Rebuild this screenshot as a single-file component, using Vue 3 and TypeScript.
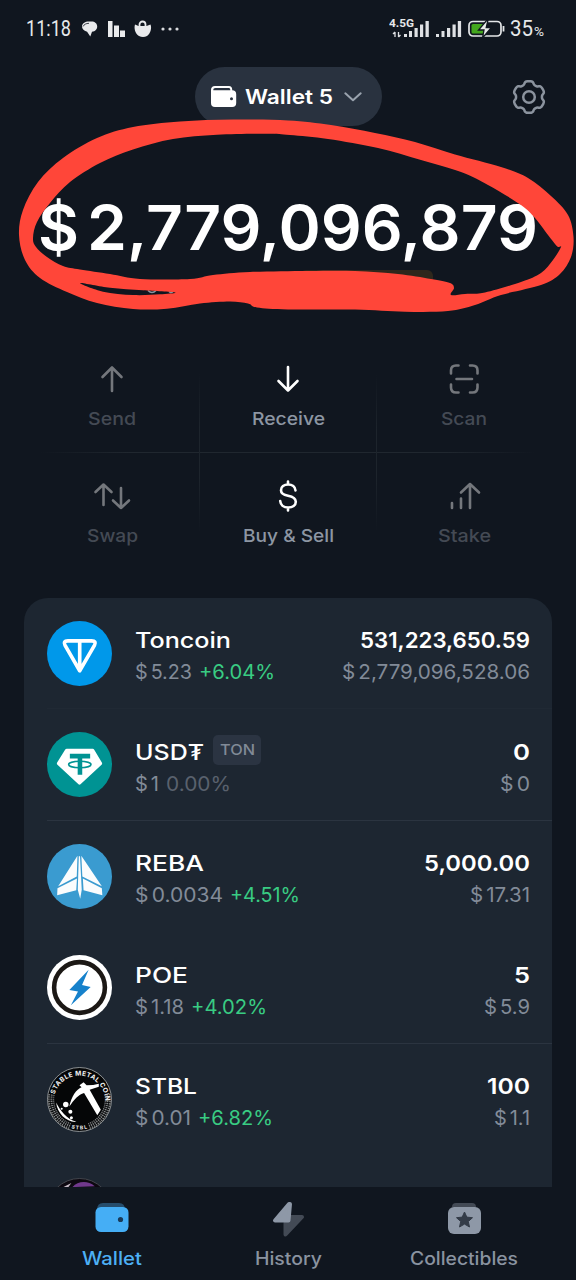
<script setup lang="ts">
type Point = [number, number]

interface Action { id: string; label: string; width: number; muted: boolean }
interface Token {
  id: string
  name: string
  nameW: number
  tag?: string
  price: string
  priceW: number
  change: string
  changeW: number
  flat?: boolean
  amount: string
  amountW: number
  value: string
  valueW: number
}

/* Stretches a line of text horizontally to the given advance width. */
const vFit = {
  mounted(el: HTMLElement, binding: { value: number; arg?: string }) {
    const natural = el.getBoundingClientRect().width
    el.style.width = `${binding.value}px`
    el.style.transform = `scaleX(${binding.value / natural})`
  },
}

const actions: Action[] = [
  { id: 'send', label: 'Send', width: 48, muted: true },
  { id: 'receive', label: 'Receive', width: 73, muted: false },
  { id: 'scan', label: 'Scan', width: 46, muted: true },
  { id: 'swap', label: 'Swap', width: 51, muted: true },
  { id: 'buy', label: 'Buy & Sell', width: 91, muted: false },
  { id: 'stake', label: 'Stake', width: 53, muted: true },
]

const tokens: Token[] = [
  { id: 'ton', name: 'Toncoin', nameW: 96, price: '5.23', priceW: 57, change: '+6.04%', changeW: 76, amount: '531,223,650.59', amountW: 170, value: '2,779,096,528.06', valueW: 188 },
  { id: 'usdt', name: 'USD₮', nameW: 69, tag: 'TON', price: '1', priceW: 24, change: '0.00%', changeW: 65, flat: true, amount: '0', amountW: 17, value: '0', valueW: 30 },
  { id: 'reba', name: 'REBA', nameW: 69, price: '0.0034', priceW: 88, change: '+4.51%', changeW: 70, amount: '5,000.00', amountW: 106, value: '17.31', valueW: 60 },
  { id: 'poe', name: 'POE', nameW: 53, price: '1.18', priceW: 49, change: '+4.02%', changeW: 76, amount: '5', amountW: 16, value: '5.9', valueW: 46 },
  { id: 'stbl', name: 'STBL', nameW: 62, price: '0.01', priceW: 56, change: '+6.82%', changeW: 75, amount: '100', amountW: 43, value: '1.1', valueW: 36 },
]

function smooth(points: Point[]): string {
  const n = points.length
  let d = `M${points[0][0]} ${points[0][1]}`
  for (let i = 0; i < n; i++) {
    const a = points[(i - 1 + n) % n]
    const b = points[i]
    const c = points[(i + 1) % n]
    const e = points[(i + 2) % n]
    d += `C${b[0] + (c[0] - a[0]) / 6} ${b[1] + (c[1] - a[1]) / 6} ${c[0] - (e[0] - b[0]) / 6} ${c[1] - (e[1] - b[1]) / 6} ${c[0]} ${c[1]}`
  }
  return d + 'Z'
}

const outer: Point[] = [
  [19, 235], [23, 210], [38, 182], [63, 158], [97, 138], [133, 127], [180, 121.5], [233, 119.5], [288, 120.5], [331, 125],
  [375, 133], [415, 142], [455, 154.5], [501, 167], [528, 178], [551, 196], [568, 215], [573.5, 237], [571, 257], [560, 274],
  [541, 285], [501, 295], [475, 305], [448, 311], [405, 311.7], [355, 309.5], [288, 309.5], [257, 307.5], [248, 303.5], [230, 301.5],
  [200, 303.5], [167, 308.7], [133, 309], [97, 303], [67, 292], [40, 278], [25, 260],
]
const inner: Point[] = [
  [33, 238], [37, 222], [50, 203], [70, 182], [100, 163], [133, 149.5], [173, 139], [217, 134.7], [267, 133.7], [290, 135],
  [328, 139], [378, 148], [421, 160], [461, 172], [488, 185], [521, 205], [535, 218], [548, 235], [555, 244], [558, 247], [561, 247],
  [553, 260], [541, 273], [521, 282], [485, 292.5], [465, 294], [451, 295], [454, 288], [450, 283], [431, 279], [398, 274],
  [355, 271], [308, 271], [250, 272], [213, 275], [190, 279], [140, 279], [110, 274], [80, 269.5], [63, 266], [47, 257], [36, 247],
]
const slit: Point[] = [[80, 283], [110, 287.7], [143, 290.3], [175, 292.5], [160, 294.3], [133, 295], [103, 291.7]]
const scribble = smooth(outer) + smooth(inner) + smooth(slit)

const gear = smooth(
  Array.from({ length: 72 }, (_, i): Point => {
    const t = (i / 72) * Math.PI * 2
    const wave = Math.tanh(2.2 * (Math.cos(6 * t) + 0.35))
    const r = 14.3 + 1.5 * wave
    return [18 + r * Math.sin(t), 18 - r * Math.cos(t)]
  }),
)
</script>

<template>
  <main class="phone">
    <header class="status">
      <div class="status-left">
        <span v-fit="45" class="t clock">11:18</span>
        <svg class="status-icons" width="104" height="20" viewBox="0 0 104 20">
          <path d="M8 2.500h2.500c3.300 0 5.700 2 5.700 5 0 2.700-2 5.200-5.200 5.200l-1.700 4.800-3.200-4.800C2.500 12 1 9.500 1 7.500 1 4.500 4 2.500 8 2.500z" fill="#e9eaec" />
          <path d="M2 7.500c1-2 3-3.200 6-3.200" fill="none" stroke="#10161f" stroke-width=".8" />
          <path d="M27 2h4.500v16H27zM33 6.500h5V18h-5zM39 11.500h5V18h-5z" fill="#e9eaec" />
          <path d="M54 5.500l3.500 1.500h8L69.500 5.500c1.500 3.500 0 9-3.500 11.500q-4 2.200-8 0C54 14.500 52.800 9 54 5.500z" fill="#e9eaec" />
          <path d="M58.500 7.500v-2a3 3 0 0 1 6 0v2" fill="none" stroke="#e9eaec" stroke-width="1.800" />
          <g fill="#d9dbde"><circle cx="82" cy="10" r="1.600" /><circle cx="89" cy="10" r="1.600" /><circle cx="96" cy="10" r="1.600" /></g>
        </svg>
      </div>
      <div class="status-right">
        <div class="network">
          <span v-fit="25" class="t gen">4.5G</span>
          <svg width="42" height="18" viewBox="0 0 42 18">
            <path d="M6 17v-5M4 14l2-2M9.500 12v5M9.500 17l2-2" stroke="#dfe1e4" stroke-width="1.300" fill="none" />
            <g fill="#dfe1e4"><rect x="15" y="14" width="3" height="3" /><rect x="20" y="11" width="3" height="6" /><rect x="25.500" y="8" width="3.200" height="9" /><rect x="31" y="4.500" width="3.200" height="12.500" /><rect x="36.500" y="1" width="3.300" height="16" /></g>
          </svg>
        </div>
        <svg class="bars" width="26" height="18" viewBox="0 0 26 18" fill="#dfe1e4">
          <rect x="0" y="14" width="3" height="3" /><rect x="5.500" y="11" width="3" height="6" /><rect x="11" y="8" width="3.200" height="9" /><rect x="16.500" y="4.500" width="3.200" height="12.500" /><rect x="21.800" y="1" width="3.300" height="16" />
        </svg>
        <svg class="battery" width="38" height="18" viewBox="0 0 38 18">
          <rect x="1" y="1.500" width="32" height="14.500" rx="4" fill="none" stroke="#e4e6e8" stroke-width="1.700" />
          <rect x="3.500" y="4" width="13" height="9.500" rx="1.500" fill="#43a61d" />
          <path d="M19 0l-8.500 10h5.500l-1.500 8 9-10.500h-5.300L20 0z" fill="#e8ebe8" stroke="#10161f" stroke-width="1.300" />
          <path d="M35.500 6v5.500" stroke="#e4e6e8" stroke-width="1.800" />
        </svg>
        <span v-fit="23" class="t charge">35</span>
        <span v-fit="10" class="t pct">%</span>
      </div>
    </header>

    <section class="top">
      <button class="picker">
        <svg width="26" height="22" viewBox="0 0 26 22">
          <path fill-rule="evenodd" fill="#fff" d="M4 0h14c2 0 3.200 1.300 3.200 3.200v1c2.600.1 4 1.500 4 4V17c0 2.700-1.300 4-4 4H4c-2.700 0-4-1.300-4-4V4c0-2.500 1.500-4 4-4zM4.500 2.100C2.800 2.100 2.300 3 2.300 4.200h17c0-1.500-.6-2.100-1.800-2.100zM20.500 11.200a1.500 1.500 0 1 0 0 3 1.500 1.500 0 0 0 0-3z" />
        </svg>
        <span v-fit="88" class="t picker-name">Wallet 5</span>
        <svg width="18" height="10" viewBox="0 0 18 10"><path d="M1.300 1.300L9 8.300l7.700-7" fill="none" stroke="#9aa3ae" stroke-width="2" stroke-linecap="round" stroke-linejoin="round" /></svg>
      </button>
      <svg class="gear" width="36" height="36" viewBox="0 0 36 36" fill="none" stroke="#8b939e" stroke-width="2.500"><path :d="gear" /><circle cx="18" cy="18" r="5.800" /></svg>
    </section>

    <section class="balance">
      <span v-fit="41" class="t big">$</span><span v-fit="451" class="t big amount">2,779,096,879</span>
      <i class="badge"></i>
    </section>

    <svg class="mark" width="576" height="330" viewBox="0 0 576 330">
      <path d="M148 290.500q4 4 8 0M169 291.500q2 2 4 0" fill="none" stroke="#8b939e" stroke-width="1.500" />
      <path :d="scribble" fill="#ff4639" fill-rule="evenodd" />
    </svg>

    <section class="actions">
      <i class="line-h"></i><i class="line-v first"></i><i class="line-v second"></i>
      <button v-for="a in actions" :key="a.id" class="action" :class="{ muted: a.muted }">
        <svg width="40" height="36" viewBox="0 0 40 36" fill="none" stroke="currentColor" stroke-width="2.600" stroke-linecap="round" stroke-linejoin="round">
          <path v-if="a.id === 'send'" d="M20 30V6.500M10.500 16L20 6.500l9.500 9.500" />
          <path v-else-if="a.id === 'receive'" d="M20 6v23.500M10.500 20l9.500 9.500 9.500-9.500" />
          <path v-else-if="a.id === 'scan'" d="M7 12.500V9.500q0-5 5-5h2.500M26 4.500h2.500q5 0 5 5v3M33.500 23.500v3q0 5-5 5h-2.500M14.500 31.500h-2.500q-5 0-5-5v-3M12.500 18h15.500" />
          <path v-else-if="a.id === 'swap'" d="M11.500 27V6.500M3.500 14l8-7.500 8 7.500M29 10v20M21 22.500l8 7.500 8-7.500" />
          <path v-else-if="a.id === 'buy'" d="M20 3.500v3M20 29.500v3M27.500 12.500c-.3-3.800-3.300-6-7.300-6-4.300 0-7.200 2.300-7.200 5.700 0 3.600 3 4.800 7 5.600 4.600.9 7.800 2.200 7.800 6 0 3.500-3.200 5.700-7.600 5.700-4.700 0-7.700-2.600-8-6.500" />
          <path v-else d="M8 30v-5M17 30v-9.500M26 30V6M17 14.500L26 6l9 8.500" />
        </svg>
        <span v-fit="a.width" class="t action-label">{{ a.label }}</span>
      </button>
    </section>

    <section class="card">
      <article v-for="k in tokens" :key="k.id" class="row" :class="k.id">
        <svg v-if="k.id === 'ton'" class="coin" viewBox="0 0 64 64">
          <circle cx="32" cy="32" r="32" fill="#0098ea" />
          <path d="M20.500 19.500h23.500q5 0 2.700 4.500L32.200 49 17.800 24q-2.300-4.500 2.700-4.500zM32.200 20v28" fill="none" stroke="#fff" stroke-width="3.600" stroke-linejoin="round" />
        </svg>
        <svg v-else-if="k.id === 'usdt'" class="coin" viewBox="0 0 64 64">
          <circle cx="32" cy="32" r="32" fill="#009393" />
          <path d="M19.500 16.500h25.500q1 0 1.500 1L54 30q.7 1.200-.3 2.200L33 51.500q-1 .9-2 0L10.300 32.200q-1-1-.3-2.200l7.800-12.500q.6-1 1.700-1z" fill="#fff" />
          <path d="M22.500 21.500h20v4.500h-7.800v16h-4.500V26h-7.700z" fill="#009393" />
          <ellipse cx="32.300" cy="32" rx="11" ry="3.200" fill="none" stroke="#009393" stroke-width="1.600" />
        </svg>
        <svg v-else-if="k.id === 'reba'" class="coin" viewBox="0 0 64 64">
          <circle cx="32" cy="32" r="32" fill="#3a9bd0" />
          <path d="M30 11.500L29.300 32 11 41.500zM33.800 11.500L34.800 32 54 41.500zM10.300 43.500L29.500 34l-.7 11.500L10 50.500zM35.300 34l18.700 9.500.5 7-18.500-5zM31.300 12h1.200l1.700 33-1.500 9-2.400-9z" fill="#fafcfd" />
        </svg>
        <svg v-else-if="k.id === 'poe'" class="coin" viewBox="0 0 64 64">
          <circle cx="32" cy="32" r="32" fill="#fff" />
          <circle cx="32" cy="32" r="25" fill="#fff" stroke="#1c1815" stroke-width="4.500" />
          <path d="M41 14.500L22 34.500l8.500 1.500L23.500 49.500 43 31.500l-8.500-2z" fill="#1681cb" />
        </svg>
        <svg v-else class="coin" viewBox="0 0 64 64">
          <defs>
            <path id="arc-top" d="M6.500 34a25.500 25.500 0 1 1 51 0" />
            <path id="arc-bottom" d="M2.500 32a29.500 29.500 0 0 0 59 0" />
          </defs>
          <circle cx="32" cy="32" r="31.500" fill="#050607" stroke="#a9acae" stroke-width=".8" />
          <path d="M4.500 27a28 28 0 0 0 19 31.500M59.500 27a28 28 0 0 1-19 31.500" fill="none" stroke="#85888a" stroke-width="6" stroke-dasharray="1.200 .9" />
          <circle cx="32" cy="32" r="29" fill="none" stroke="#050607" stroke-width=".8" />
          <circle cx="32" cy="32" r="26.500" fill="none" stroke="#050607" stroke-width=".7" />
          <text class="ring"><textPath href="#arc-top" textLength="72" startOffset="7">STABLE METAL COIN</textPath></text>
          <text class="ring small"><textPath href="#arc-bottom" textLength="16" startOffset="38">STBL</textPath></text>
          <path d="M22 39c2-10 7-17 12-19l-2-2 4-3 3 3q7 0 12-1.500v3l-9 3L53 42l-3.500 5.500L36.500 25.500C31 27 26.500 32 22 39z" fill="#fff" />
          <path d="M9 35c4 8 10 16 20 19-9 1-19-8-20-19z" fill="#fff" />
          <circle cx="18.500" cy="37" r="2.700" fill="#fff" /><circle cx="23" cy="44" r="2" fill="#fff" /><circle cx="14.500" cy="41" r="1" fill="#fff" /><circle cx="24" cy="50" r="1.500" fill="#fff" />
        </svg>
        <div class="info">
          <div class="line">
            <span v-fit="k.nameW" class="t name">{{ k.name }}</span>
            <span v-if="k.tag" class="tag"><span v-fit="35" class="t tag-text">{{ k.tag }}</span></span>
          </div>
          <div class="line sub">
            <span v-fit="k.priceW" class="t"><span class="cur">$</span>{{ k.price }}</span>
            <span v-fit="k.changeW" class="t change" :class="{ flat: k.flat }">{{ k.change }}</span>
          </div>
        </div>
        <div class="info right">
          <div class="line"><span v-fit="k.amountW" class="t name qty">{{ k.amount }}</span></div>
          <div class="line sub"><span v-fit="k.valueW" class="t"><span class="cur">$</span>{{ k.value }}</span></div>
        </div>
      </article>
      <article class="row">
        <svg class="coin" viewBox="0 0 64 64">
          <circle cx="32" cy="32" r="31.500" fill="#0c0810" stroke="#4d5056" stroke-width=".8" />
          <path d="M25 9c5-6 15-7 22-1z" fill="#70398c" /><path d="M16 9l8-4-3 4z" fill="#c9bdc9" />
        </svg>
      </article>
    </section>

    <nav class="tabs">
      <button class="tab active">
        <svg width="40" height="40" viewBox="0 0 40 40">
          <path d="M5 10q0-7 6-7h16q6 0 6 7z" fill="#264d6c" /><rect x="3.500" y="7" width="33" height="25" rx="5.500" fill="#45aef5" /><circle cx="28.500" cy="19.500" r="2.600" fill="#193b59" />
        </svg>
        <span v-fit="60" class="t tab-label">Wallet</span>
      </button>
      <button class="tab">
        <svg width="40" height="40" viewBox="0 0 40 40" stroke-linejoin="round" stroke-width="4">
          <path d="M23 17h11L17.500 34.500V23z" fill="#434a55" stroke="#434a55" /><path d="M21 4L7 20.500h13.500L22 4z" fill="#8e98a7" stroke="#8e98a7" />
        </svg>
        <span v-fit="67" class="t tab-label">History</span>
      </button>
      <button class="tab">
        <svg width="40" height="40" viewBox="0 0 40 40">
          <path d="M8 7q0-4 4-4h16q4 0 4 4z" fill="#434a55" /><rect x="4" y="7" width="33" height="27" rx="6" fill="#8e98a7" />
          <path d="M20.500 12l2.300 5.100 5.700.6-4.200 3.800 1.200 5.500-5-2.900-5 2.900 1.200-5.500-4.200-3.800 5.700-.6z" fill="#343c48" stroke="#343c48" stroke-linejoin="round" />
        </svg>
        <span v-fit="108" class="t tab-label">Collectibles</span>
      </button>
    </nav>
  </main>
</template>

<style>
body { background: #10161f; }
</style>

<style scoped>
.phone {
  position: relative;
  display: flex;
  flex-direction: column;
  width: 576px;
  height: 1280px;
  overflow: hidden;
  background: #10161f;
  color: #fff;
  font-family: Inter, "Liberation Sans", sans-serif;
}
button { display: flex; align-items: center; padding: 0; border: 0; background: none; font: inherit; color: inherit; }
svg { display: block; flex: none; }
.t { display: inline-block; flex: none; white-space: nowrap; text-align: left; transform-origin: 0 50%; }

.status { display: flex; justify-content: space-between; height: 58px; padding: 0 32px 0 26px; color: #e6e8ea; font-family: Roboto, sans-serif; }
.status-left, .status-right { display: flex; align-items: center; }
.clock { font-size: 21.500px; }
.status-icons { margin-left: 10px; }
.network { display: flex; position: relative; width: 43px; margin-right: 4px; }
.gen { position: absolute; left: 0; top: -3px; z-index: 1; font-size: 11.500px; font-weight: 700; line-height: 13px; }
.battery { margin: 0 2px 0 6px; }
.charge { margin-left: 2px; font-size: 22px; }
.pct { margin: 6px 0 0 1px; font-size: 13px; }

.top { display: grid; grid-template-columns: 1fr 187px 1fr; align-items: center; height: 59px; margin-top: 9px; }
.picker { grid-column: 2; height: 59px; padding: 2px 0 0 16px; border-radius: 30px; background: #29323f; }
.picker-name { margin: 0 11px 0 8px; font-size: 19.500px; font-weight: 600; line-height: 30px; }
.gear { justify-self: end; margin: 2px 29px 0 0; }

.balance { display: flex; position: relative; height: 80px; margin-top: 61px; padding-left: 38px; line-height: 80px; }
.big { font-size: 62.500px; font-weight: 600; }
.amount { margin-left: 8px; }
.badge { position: absolute; left: 300px; top: 83px; width: 133px; height: 28px; border-radius: 6px; background: #2e271c; }
.mark { position: absolute; left: 0; top: 0; }

.actions { display: grid; position: relative; grid-template-columns: repeat(3, 176px); grid-template-rows: 117px 117px; margin: 69px 24px 0; }
.action { flex-direction: column; justify-content: flex-start; padding-top: 25px; }
.action-label { margin-top: 10px; font-size: 17.500px; font-weight: 500; line-height: 24px; color: #8d96a3; }
.muted { color: #74777c; }
.muted .action-label { color: #444a54; }
.line-h { position: absolute; left: 0; right: 0; top: 116px; height: 1px; background: linear-gradient(90deg, transparent 3%, #20272f 20%, #20272f 80%, transparent 97%); }
.line-v { position: absolute; top: 38px; bottom: 38px; width: 1px; background: linear-gradient(transparent, #1d242c 35%, #1d242c 65%, transparent); }
.first { left: 175px; }
.second { left: 352px; }

.card { height: 590px; margin: 28px 24px 0; border-radius: 24px 24px 0 0; background: #1d2631; overflow: hidden; }
.row { display: flex; position: relative; height: 111.500px; padding: 0 22px 0 23px; }
.row::after { content: ""; position: absolute; left: 23px; right: 0; bottom: 0; height: 1px; background: #202934; }
.usdt::after, .poe::after { background: #2b3440; }
.reba::after, .stbl::after { background: none; }
.coin { width: 65px; height: 65px; margin-top: 23px; }
.info { flex: 1; margin: 26.500px 0 0 23px; }
.line { display: flex; align-items: center; height: 32px; line-height: 32px; }
.name { font-size: 22px; font-weight: 500; }
.qty { font-weight: 600; }
.tag { display: flex; height: 30px; margin: -3px 0 0 9px; padding: 0 6px 0 7px; border-radius: 5px; background: #2b3442; line-height: 30px; }
.tag-text { font-size: 14.500px; font-weight: 500; color: #818a97; }
.sub { font-size: 20px; color: #828b98; }
.cur { margin-right: 3px; }
.change { margin-left: 7px; color: #39cc83; }
.flat { color: #59616d; }
.right .line { justify-content: flex-end; }
.ring { font: 700 6.500px Inter, sans-serif; fill: #f3f3f3; }
.small { font-size: 5px; }

.tabs { display: grid; grid-template-columns: repeat(3, 176px); height: 93px; padding: 0 24px; }
.tab { flex-direction: column; padding-top: 13px; color: #8a93a0; }
.tab-label { margin-top: 7px; font-size: 18px; font-weight: 500; line-height: 24px; }
.active { color: #4db0f5; }
</style>
